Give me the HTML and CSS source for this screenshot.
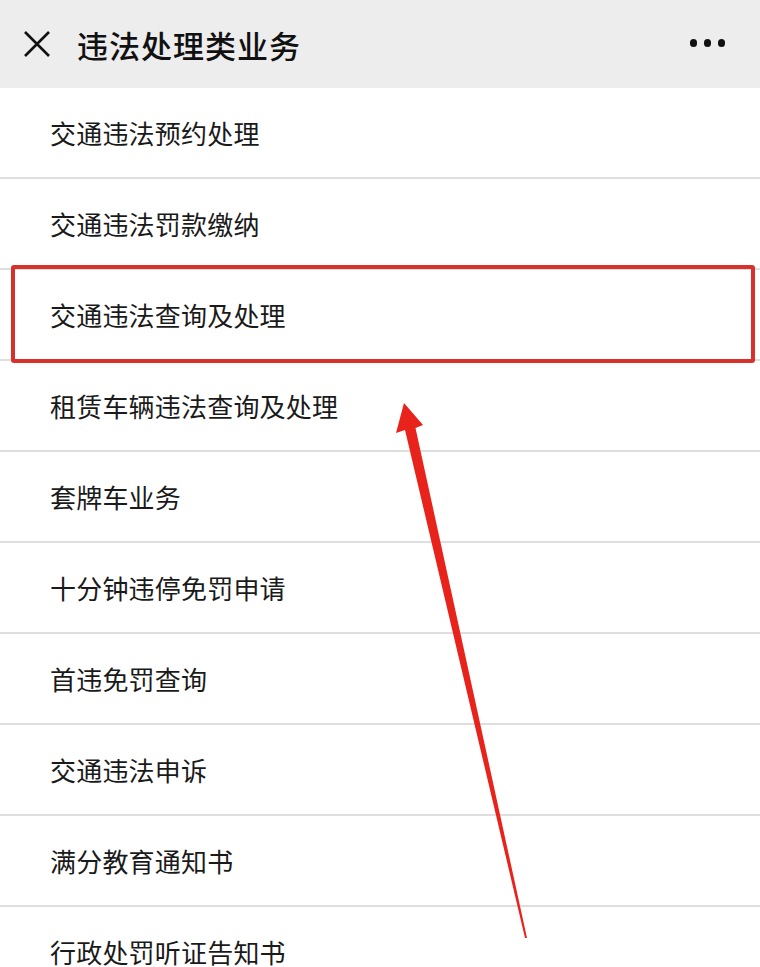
FILE: index.html
```html
<!DOCTYPE html>
<html lang="zh-CN">
<head>
<meta charset="utf-8">
<title>违法处理类业务</title>
<link rel="stylesheet" href="styles.css">
</head>
<body>
<div class="page">
  <header class="topbar">
    <svg class="close" width="28" height="28" viewBox="0 0 28 28">
      <path d="M2 2 L26 26 M26 2 L2 26" stroke="#111" stroke-width="2.6" fill="none"/>
    </svg>
    <h1 class="title">违法处理类业务</h1>
    <div class="more"><span></span><span></span><span></span></div>
  </header>
  <ul class="list">
    <li class="item">交通违法预约处理</li>
    <li class="item">交通违法罚款缴纳</li>
    <li class="item item-marked">交通违法查询及处理</li>
    <li class="item">租赁车辆违法查询及处理</li>
    <li class="item">套牌车业务</li>
    <li class="item">十分钟违停免罚申请</li>
    <li class="item">首违免罚查询</li>
    <li class="item">交通违法申诉</li>
    <li class="item">满分教育通知书</li>
    <li class="item">行政处罚听证告知书</li>
  </ul>
  <svg class="arrow" width="760" height="967" viewBox="0 0 760 967">
    <polygon points="404,403 423,425 415.5,428 527,938 525,938 405,430 396,433" fill="#e8231b"/>
  </svg>
</div>
</body>
</html>
```
FILE: styles.css
```css
* { box-sizing: border-box; }
html, body { margin: 0; padding: 0; background: #fff; }
body {
  font-family: "Noto Sans CJK SC", "Noto Sans", sans-serif;
  color: #1a1a1a;
}
.page {
  position: relative;
  width: 760px;
  height: 967px;
  overflow: hidden;
}
.topbar {
  height: 88px;
  background: #ededed;
  display: flex;
  align-items: center;
  padding: 0 24px 0 23px;
}
.close { flex: none; }
.title {
  margin: 0 0 0 26px;
  font-size: 31px;
  font-weight: 500;
  color: #111;
  flex: 1;
  letter-spacing: 1px;
}
.more {
  display: flex;
  gap: 6.5px;
  margin-right: 11px;
  margin-top: -2px;
}
.more span {
  width: 7.5px;
  height: 7.5px;
  border-radius: 50%;
  background: #111;
}
.list { list-style: none; margin: 0; padding: 0; }
.item {
  height: 91px;
  border-bottom: 2px solid #dedede;
  display: flex;
  align-items: center;
  padding-left: 50px;
  font-size: 26px;
  color: #1a1a1a;
  letter-spacing: 0.2px;
}
.item-marked { position: relative; }
.item-marked::after {
  content: "";
  position: absolute;
  left: 11px;
  right: 5px;
  top: -5px;
  bottom: -4px;
  border: 4px solid #d8302a;
  border-radius: 3px;
}
.arrow {
  position: absolute;
  left: 0;
  top: 0;
  pointer-events: none;
}
```
